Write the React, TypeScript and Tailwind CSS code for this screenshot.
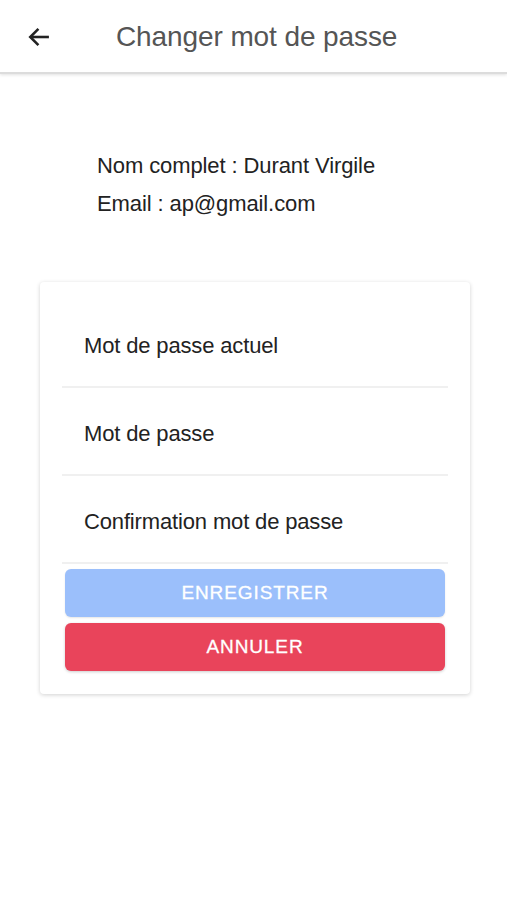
import React from "react";

export default function App() {
  const font = { fontFamily: '"Liberation Sans", Arial, sans-serif' };
  return (
    <div className="w-[507px] h-[900px] bg-white flex flex-col" style={font}>
      <div className="h-[74px] flex items-center border-b-2 border-[#dcdcdc] shadow-[0_1px_3px_rgba(0,0,0,0.12)]">
        <div className="w-[78px] flex items-center pl-[25px] pt-[2px]">
          <svg width="28" height="28" viewBox="0 0 24 24" fill="none" stroke="#222" strokeWidth="2.2">
            <path d="M20.5 12H5" />
            <path d="M11.5 5l-7 7 7 7" strokeLinejoin="miter" />
          </svg>
        </div>
        <div className="pl-[38px] text-[28px] text-[#555555] leading-none pt-[2px] tracking-[-0.1px]">Changer mot de passe</div>
      </div>

      <div className="pl-[97px] pt-[79px] flex flex-col gap-[12px] text-[22px] text-[#222222] leading-[26px] tracking-[-0.1px]">
        <div>Nom complet : Durant Virgile</div>
        <div>Email : ap@gmail.com</div>
      </div>

      <div className="mt-[65px] ml-[40px] w-[430px] bg-white rounded-[4px] shadow-[0_1px_4px_rgba(0,0,0,0.18)] px-[22px] pb-[23px]">
        {["Mot de passe actuel", "Mot de passe", "Confirmation mot de passe"].map((l, i) => (
          <div key={i} className={`border-b-2 border-[#f0f0f0] flex items-end pl-[22px] text-[22px] text-[#222222] pb-[27px] tracking-[-0.15px] ${i === 0 ? "h-[106px]" : "h-[88px]"}`}>
            <span className="leading-[26px]">{l}</span>
          </div>
        ))}
        <div className="px-[3px] pt-[5px] flex flex-col gap-[6px]">
          <button className="h-[48px] rounded-[6px] bg-[#9bbffb] text-white text-[19px] tracking-[0.9px] shadow-[0_1px_2px_rgba(0,0,0,0.1)] [-webkit-text-stroke:0.3px_white]" style={font}>ENREGISTRER</button>
          <button className="h-[48px] rounded-[6px] bg-[#e9445b] text-white text-[19px] tracking-[0.9px] shadow-[0_1px_3px_rgba(0,0,0,0.2)] [-webkit-text-stroke:0.3px_white]" style={font}>ANNULER</button>
        </div>
      </div>
    </div>
  );
}
